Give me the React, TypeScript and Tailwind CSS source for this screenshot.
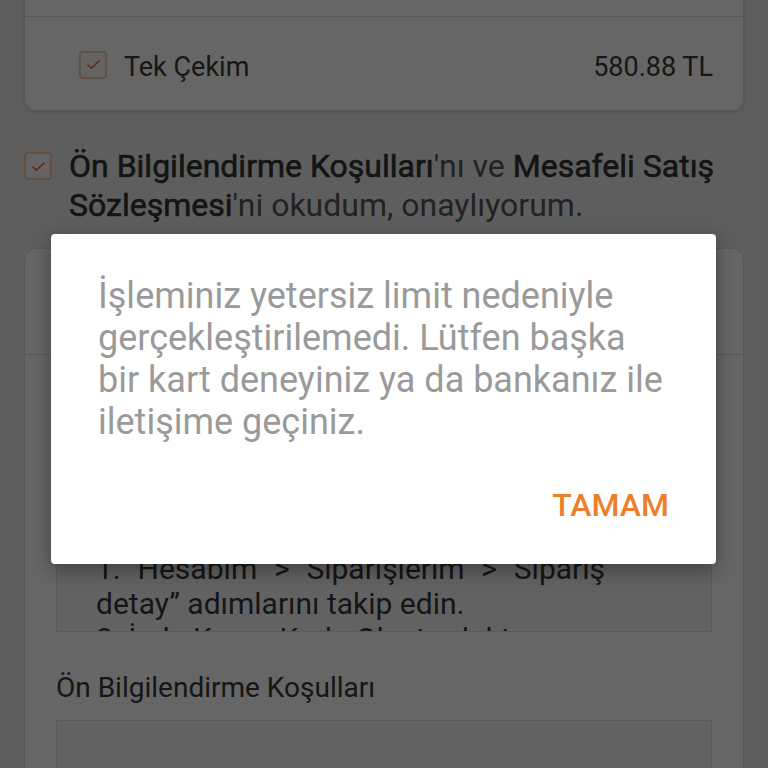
import React from "react";

function Check({ className = "" }: { className?: string }) {
  return (
    <span
      className={
        "flex h-[28px] w-[28px] shrink-0 items-center justify-center rounded-[4px] border-2 border-[#f6cba8] bg-[#fffaf6] " +
        className
      }
    >
      <svg width="15" height="11" viewBox="0 0 15 11" fill="none">
        <path
          d="M2 6 L5.5 9.2 L13 2"
          stroke="#e8652b"
          strokeWidth="1.6"
          strokeLinecap="round"
          strokeLinejoin="round"
        />
      </svg>
    </span>
  );
}

export default function App() {
  return (
    <div className="relative h-[768px] w-[768px] overflow-hidden bg-[#ececec] font-['Roboto',sans-serif] text-[#333333]">
      <div className="flex flex-col px-[24px]">
        {/* installment options card */}
        <div className="-mt-[40px] rounded-[12px] border border-[#dddddd] bg-white shadow-[0_2px_4px_rgba(0,0,0,0.12)]">
          <div className="h-[56px] border-b border-[#dcdcdc]" />
          <div className="flex h-[93px] items-center pl-[54px] pr-[30px]">
            <Check className="mt-[2px]" />
            <span className="ml-[17px] pt-[7px] text-[27px] text-[#3a3a3a]">Tek Çekim</span>
            <span className="ml-auto pt-[7px] text-[27px] text-[#3a3a3a]">580.88 TL</span>
          </div>
        </div>

        {/* agreement consent */}
        <div className="mt-[36px] flex items-start gap-[17px]">
          <Check className="mt-[5px]" />
          <p className="whitespace-nowrap text-[32px] leading-[39px] text-[#555555]">
            <span className="text-[#333333] [-webkit-text-stroke:0.6px_#333333]">Ön Bilgilendirme Koşulları</span>'nı ve{" "}
            <span className="text-[#333333] [-webkit-text-stroke:0.6px_#333333]">Mesafeli Satış</span>
            <br />
            <span className="text-[#333333] [-webkit-text-stroke:0.6px_#333333]">Sözleşmesi</span>'ni okudum, onaylıyorum.
          </p>
        </div>

        {/* contracts card */}
        <div className="mt-[23px] rounded-[12px] border border-[#dddddd] bg-white">
          <div className="h-[106px] border-b border-[#dcdcdc]" />
          <div className="flex flex-col px-[31px] pt-[22px]">
            <div className="h-[255px] overflow-hidden border border-[#e2e2e2] bg-[#f6f6f6] pl-[39px] pr-[20px] pt-[173px] text-[30px] leading-[35px] text-[#383838]">
              <div className="w-[509px] whitespace-nowrap [text-align-last:justify]">
                1.&nbsp; Hesabım&nbsp; &gt;&nbsp; Siparişlerim&nbsp; &gt;&nbsp; Sipariş
              </div>
              <div className="whitespace-nowrap">detay” adımlarını takip edin.</div>
              <div className="whitespace-nowrap">2. İade Kargo Kodu Oluşturduktan sonra</div>
            </div>
            <div className="mt-[39px] text-[28px] leading-[34px] text-[#383838]">
              Ön Bilgilendirme Koşulları
            </div>
            <div className="mt-[15px] h-[220px] border border-[#e2e2e2] bg-[#f6f6f6]" />
          </div>
        </div>
      </div>

      {/* dim layer */}
      <div className="absolute inset-0 bg-black/60" />

      {/* alert dialog */}
      <div className="absolute left-[51px] top-[234px] flex h-[330px] w-[665px] flex-col rounded-[4px] bg-white shadow-[0_6px_20px_rgba(0,0,0,0.35)]">
        <p className="whitespace-nowrap pl-[47px] pt-[41px] text-[36px] leading-[42px] text-[#9a9a9a]">
          İşleminiz yetersiz limit nedeniyle
          <br />
          gerçekleştirilemedi. Lütfen başka
          <br />
          bir kart deneyiniz ya da bankanız ile
          <br />
          iletişime geçiniz.
        </p>
        <div className="mt-auto flex justify-end pb-[40px] pr-[47px]">
          <button className="text-[32px] font-medium leading-[38px] text-[#ee7f2a]">TAMAM</button>
        </div>
      </div>
    </div>
  );
}
